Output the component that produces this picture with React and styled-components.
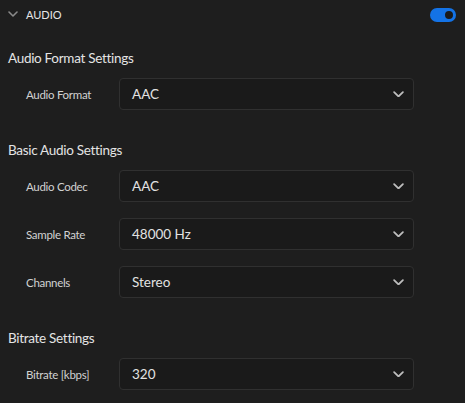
import React from "react";
import styled, { createGlobalStyle } from "styled-components";

const GlobalStyle = createGlobalStyle`
  html, body {
    margin: 0;
    background: #1e1e1e;
  }
  body {
    font-family: Lato, "Open Sans", "Liberation Sans", sans-serif;
    color: #dcdcdc;
  }
`;

const sections = [
  {
    title: "Audio Format Settings",
    rows: [{ label: "Audio Format", value: "AAC" }],
  },
  {
    title: "Basic Audio Settings",
    rows: [
      { label: "Audio Codec", value: "AAC" },
      { label: "Sample Rate", value: "48000 Hz" },
      { label: "Channels", value: "Stereo" },
    ],
  },
  {
    title: "Bitrate Settings",
    rows: [{ label: "Bitrate [kbps]", value: "320" }],
  },
];

const Chevron = ({ size = 10, color = "#a8a8a8" }) => (
  <svg width={size} height={size * 0.6} viewBox="0 0 10 6" fill="none">
    <path d="M1 1l4 4 4-4" stroke={color} strokeWidth="1.6" strokeLinecap="round" strokeLinejoin="round" />
  </svg>
);

const App = () => {
  return (
    <Panel>
      <GlobalStyle />
      <Header>
        <HeaderTitle>
          <Chevron size={10} color="#8a8a8a" />
          <span>AUDIO</span>
        </HeaderTitle>
        <Toggle>
          <Knob />
        </Toggle>
      </Header>
      {sections.map((s, i) => (
        <Section key={s.title} $first={i === 0}>
          <SectionTitle>{s.title}</SectionTitle>
          <Rows>
            {s.rows.map((r) => (
              <Row key={r.label}>
                <Label>{r.label}</Label>
                <Select>
                  <span>{r.value}</span>
                  <Chevron size={11} color="#bdbdbd" />
                </Select>
              </Row>
            ))}
          </Rows>
        </Section>
      ))}
    </Panel>
  );
};

export default App;

const Panel = styled.div`
  width: 465px;
  height: 403px;
  box-sizing: border-box;
  background: #1e1e1e;
  overflow: hidden;
`;

const Header = styled.div`
  height: 29px;
  display: flex;
  align-items: center;
  justify-content: space-between;
  padding: 0 9px 0 8px;
`;

const HeaderTitle = styled.div`
  display: flex;
  align-items: center;
  gap: 8px;
  font-size: 11px;
  color: #e6e6e6;
  svg {
    margin-top: -1px;
  }
`;

const Toggle = styled.div`
  width: 26px;
  height: 14px;
  border-radius: 7px;
  background: #1473e6;
  display: flex;
  align-items: center;
  justify-content: flex-end;
  box-sizing: border-box;
  padding: 0 1px;
`;

const Knob = styled.div`
  width: 12px;
  height: 12px;
  border-radius: 50%;
  box-sizing: border-box;
  border: 2px solid #1473e6;
  background: #1a1a1a;
`;

const Section = styled.div`
  padding: 0 0 0 8px;
  margin-top: ${(p) => (p.$first ? "19px" : "30px")};
`;

const SectionTitle = styled.div`
  font-size: 13.5px;
  line-height: 20px;
  color: #e4e4e4;
  letter-spacing: -0.3px;
`;

const Rows = styled.div`
  display: flex;
  flex-direction: column;
  gap: 16px;
  margin-top: 10px;
`;

const Row = styled.div`
  display: flex;
  align-items: center;
  padding-left: 18px;
`;

const Label = styled.div`
  width: 93px;
  font-size: 11.5px;
  color: #d2d2d2;
  letter-spacing: -0.3px;
`;

const Select = styled.div`
  width: 295px;
  height: 32px;
  box-sizing: border-box;
  border: 1px solid #303030;
  border-radius: 4px;
  background: #1a1a1a;
  display: flex;
  align-items: center;
  justify-content: space-between;
  padding: 0 9px 0 12px;
  font-size: 13.5px;
  color: #e2e2e2;
`;
